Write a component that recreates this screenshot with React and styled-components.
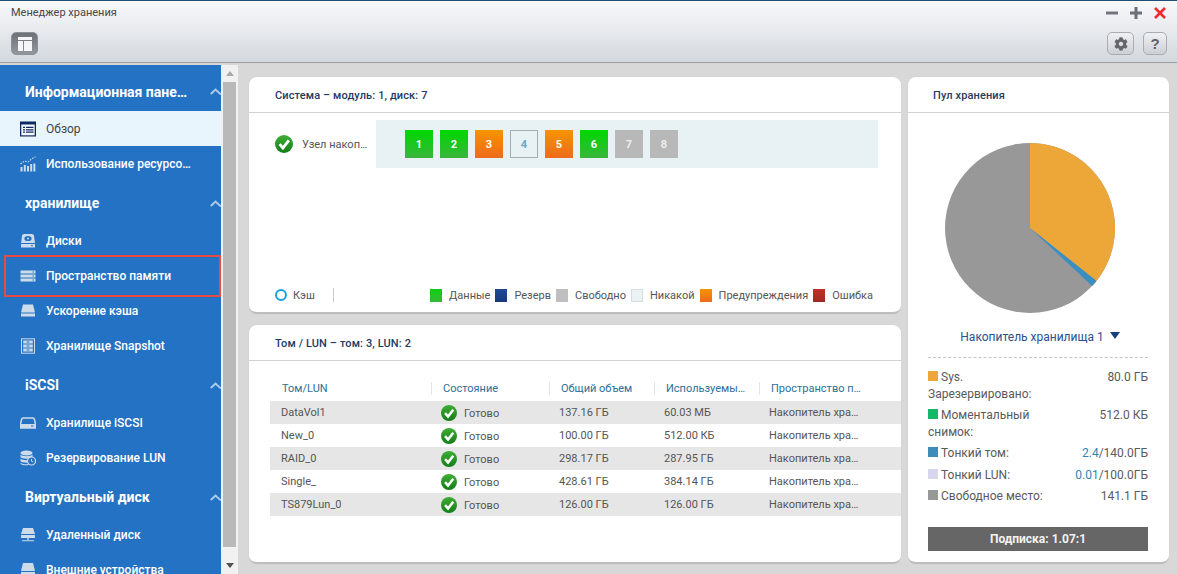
import React from 'react'
import styled, { createGlobalStyle } from 'styled-components'
import { FaCog } from 'react-icons/fa'

const GlobalStyle = createGlobalStyle`
  html, body {
    margin: 0;
    padding: 0;
    height: 100%;
    overflow: hidden;
    font-family: Roboto, "Liberation Sans", sans-serif;
  }
  * { box-sizing: border-box; }
`

const Page = styled.div`
  width: 1177px;
  height: 574px;
  display: flex;
  flex-direction: column;
  overflow: hidden;
  background: #d8d8d8;
`

const TopBar = styled.header`
  height: 63px;
  flex: none;
  display: flex;
  flex-direction: column;
  padding: 0 10px 0 11px;
  border-top: 1px solid #1f4f7a;
  border-bottom: 1px solid #9d9d9d;
  background: linear-gradient(#f7f8fa 0%, #eceef2 35%, #d3d8de 100%);
`

const TitleRow = styled.div`
  height: 23px;
  display: flex;
  align-items: center;
  justify-content: space-between;
`

const WindowTitle = styled.div`
  font-size: 11px;
  color: #474747;
`

const WindowControls = styled.div`
  display: flex;
  gap: 12px;
  margin-right: 1px;
`

const ToolRow = styled.div`
  display: flex;
  align-items: flex-start;
  justify-content: space-between;
  padding-top: 8px;
`

const ToolGroup = styled.div`
  display: flex;
  gap: 9px;
`

const ToolButton = styled.button`
  width: ${p => p.$w || 26}px;
  height: 23px;
  padding: 0;
  display: flex;
  align-items: center;
  justify-content: center;
  border: 1px solid ${p => (p.$dark ? '#8b9096' : '#a9adb2')};
  border-radius: 5px;
  color: #5f6266;
  font: bold 15px "Liberation Sans", sans-serif;
  background: ${p => (p.$dark
    ? 'linear-gradient(#6e7177, #92979e)'
    : 'linear-gradient(#f0f1f3, #ccd0d6)')};
`

const Body = styled.div`
  flex: 1;
  min-height: 0;
  display: flex;
  padding-top: 2px;
`

const Sidebar = styled.nav`
  width: 221px;
  flex: none;
  overflow: hidden;
  background: #2472c3;
  color: #fff;
`

const GroupHeader = styled.div`
  height: ${p => (p.$first ? 46 : 42)}px;
  padding: ${p => (p.$first ? 7 : 2)}px 0 0 25px;
  display: flex;
  align-items: center;
  justify-content: space-between;
  font-size: 14px;
  font-weight: 700;
  white-space: nowrap;
`

const Chevron = styled.svg`
  width: 11px;
  height: 7px;
  margin-right: 0;
  flex: none;
`

const Item = styled.div`
  position: relative;
  height: 35px;
  padding-left: 20px;
  display: flex;
  align-items: center;
  gap: 10px;
  font-size: 12px;
  font-weight: ${p => (p.$active ? 400 : 500)};
  white-space: nowrap;
  color: ${p => (p.$active ? '#444' : '#fff')};
  background: ${p => (p.$active ? '#e8f5fd' : 'transparent')};

  ${p => p.$marked && `
    &::after {
      content: '';
      position: absolute;
      left: 4px;
      right: 0;
      top: -3px;
      bottom: -4px;
      border: 2.5px solid #ea4a40;
    }
  `}
`

const ItemIcon = styled.svg`
  width: 16px;
  height: 16px;
  flex: none;
`

const ScrollTrack = styled.div`
  width: 17px;
  flex: none;
  display: flex;
  flex-direction: column;
  align-items: center;
  background: #f1f1f1;
`

const ScrollArrow = styled.div`
  height: 17px;
  flex: none;
  display: flex;
  align-items: center;
  justify-content: center;
  ${p => !p.$up && 'margin-top: auto;'}

  &::before {
    content: '';
    border-left: 4px solid transparent;
    border-right: 4px solid transparent;
    ${p => (p.$up ? 'border-bottom: 5px solid #a9a9a9;' : 'border-top: 5px solid #505050;')}
  }
`

const ScrollThumb = styled.div`
  width: 13px;
  height: 465px;
  flex: none;
  background: #b9b9b9;
`

const Main = styled.main`
  flex: 1;
  min-width: 0;
  display: grid;
  grid-template-columns: 652px 261px;
  grid-template-rows: 237px 239px;
  gap: 11px 7px;
  padding: 12px 0 0 11px;
`

const Card = styled.section`
  display: flex;
  flex-direction: column;
  min-height: 0;
  background: #fff;
  border-radius: 8px;
  border-bottom: 2px solid #bdbdbd;
  box-shadow: 0 0 1px #c4c4c4;
  ${p => p.$tall && 'grid-row: 1 / span 2; grid-column: 2;'}
`

const CardHeader = styled.div`
  height: 36px;
  flex: none;
  display: flex;
  align-items: center;
  padding: 1px 0 0 ${p => p.$left || 26}px;
  border-bottom: 1px solid #d2d2d2;
  font-size: 11px;
  font-weight: 500;
  letter-spacing: 0.12px;
  color: #1f3a63;
`

const SystemBody = styled.div`
  flex: 1;
  display: flex;
  flex-direction: column;
  justify-content: space-between;
  padding: 7px 23px 9px 26px;
`

const NodeRow = styled.div`
  display: flex;
  align-items: flex-start;
`

const NodeLabel = styled.div`
  width: 101px;
  height: 48px;
  display: flex;
  align-items: center;
  gap: 9px;
  padding-bottom: 0;
  font-size: 11px;
  color: #555;
  white-space: nowrap;
`

const DiskBand = styled.div`
  flex: 1;
  height: 48px;
  display: flex;
  align-items: center;
  gap: 7px;
  padding-left: 29px;
  background: #e8f1f4;
`

const diskFill = {
  ok: 'linear-gradient(#00d800, #38b53c)',
  warn: 'linear-gradient(#f59400, #ee6a1c)',
  empty: '#e8f1f4',
  free: '#b8b8b8',
}

const diskText = { ok: '#fff', warn: '#fff', empty: '#6ba6c9', free: '#eee' }

const Disk = styled.div`
  width: 28px;
  height: 28px;
  display: flex;
  align-items: center;
  justify-content: center;
  font-size: 11px;
  font-weight: 700;
  color: ${p => diskText[p.$state]};
  background: ${p => diskFill[p.$state]};
  border: ${p => (p.$state === 'empty' ? '1px solid #a3adb3' : 'none')};
`

const LegendRow = styled.div`
  height: 16px;
  display: flex;
  align-items: center;
  padding-right: 5px;
  font-size: 11px;
  color: #555;
`

const CacheRing = styled.span`
  width: 12px;
  height: 12px;
  margin-right: 6px;
  border: 2.5px solid #1c9fe0;
  border-radius: 50%;
`

const Divider = styled.span`
  width: 1px;
  height: 14px;
  margin: 0 0 0 18px;
  background: #c9c9c9;
`

const LegendItems = styled.div`
  margin-left: auto;
  display: flex;
  align-items: center;
  gap: 5px;
`

const LegendLabel = styled.span`
  margin-left: 2px;
`

const legendFill = {
  data: 'linear-gradient(#0fd00f, #36b83a)',
  reserve: 'linear-gradient(#1f4a96, #153a7c)',
  free: '#bfbfbf',
  none: '#eaf2f4',
  warn: 'linear-gradient(#f59400, #ee6a1c)',
  error: 'linear-gradient(#c0302a, #a02820)',
}

const LegendSwatch = styled.span`
  width: 12px;
  height: 13px;
  background: ${p => legendFill[p.$kind]};
  ${p => p.$kind === 'none' && 'border: 1px solid #d5dfe2;'}
`

const TableWrap = styled.div`
  padding: 19px 0 0 21px;
`

const columns = '161px 118px 105px 105px 116px'

const HeadRow = styled.div`
  display: grid;
  grid-template-columns: ${columns};
  height: 21px;
  padding-bottom: 4px;
  align-items: center;
  font-size: 11px;
  color: #2d6f96;
`

const HeadCell = styled.div`
  height: 13px;
  line-height: 13px;
  padding-left: ${p => (p.$first ? 12 : 11)}px;
  white-space: nowrap;
  ${p => !p.$first && 'border-left: 1px solid #e4e4e4;'}
`

const DataRow = styled.div`
  display: grid;
  grid-template-columns: ${columns};
  height: 23px;
  align-items: center;
  font-size: 11px;
  color: #555;
  white-space: nowrap;
  background: ${p => (p.$odd ? '#e6e6e6' : '#fff')};
`

const DataCell = styled.div`
  padding-left: ${p => (p.$first ? 11 : 10)}px;
`

const StatusCell = styled.div`
  display: flex;
  align-items: center;
  gap: 7px;
  padding-left: 10px;

  span { padding-top: 2px; }
`

const PoolBody = styled.div`
  flex: 1;
  display: flex;
  flex-direction: column;
  padding: 30px 21px 0 20px;
`

const Pie = styled.svg`
  width: 170px;
  height: 170px;
  margin-left: 17px;
  flex: none;
`

const PoolSelect = styled.div`
  margin-top: 15px;
  height: 17px;
  padding-left: 4px;
  display: flex;
  align-items: center;
  justify-content: center;
  gap: 6px;
  font-size: 12px;
  color: #28508f;

  &::after {
    content: '';
    margin-top: -2px;
    border-left: 5px solid transparent;
    border-right: 5px solid transparent;
    border-top: 7px solid #173f80;
  }
`

const Dashed = styled.div`
  margin: 12px 0 11px;
  border-top: 1px dashed #c6c6c6;
`

const StatRow = styled.div`
  display: flex;
  justify-content: space-between;
  align-items: flex-start;
  margin-bottom: 5px;
  font-size: 12px;
  line-height: 16.5px;
  color: #5a5a5a;
`

const StatName = styled.div`
  width: 125px;
`

const StatSwatch = styled.span`
  display: inline-block;
  width: 10px;
  height: 10px;
  margin-right: 3px;
  background: ${p => p.$color};
`

const Accent = styled.span`
  color: #2d86b5;
`

const RatioBar = styled.div`
  margin-top: 17px;
  height: 24px;
  display: flex;
  align-items: center;
  justify-content: center;
  background: #666;
  color: #f2f2f2;
  font-size: 12px;
  font-weight: 700;
`

const ICON = '#cddbea'

const icons = {
  overview: (
    <>
      <rect x="0" y="0.5" width="16" height="15" fill="#0e2a63" />
      <rect x="1.300" y="3.500" width="13.400" height="10.800" fill="#f4f9fd" />
      <path d="M3 5.800h2v1.200H3zM6 5.800h7.500v1.200H6zM3 8.200h2v1.200H3zM6 8.200h7.500v1.200H6zM3 10.600h2v1.200H3zM6 10.600h7.500v1.200H6z" fill="#0e2a63" />
    </>
  ),
  usage: (
    <>
      <path d="M0.500 11h2v4.500h-2zM3.800 9h2v6.500h-2zM7 10h2v5.500H7zM10.200 8h2v7.500h-2zM13.400 7.500h2v8h-2z" fill={ICON} />
      <path d="M0.500 8 4.500 5 8 6 12 2.500 15.500 1" fill="none" stroke={ICON} strokeWidth="1.100" strokeDasharray="1.600 1.200" />
    </>
  ),
  disk: (
    <>
      <path d="M2 3Q2 1 4 1h8q2 0 2 2l1 7H1z" fill={ICON} />
      <ellipse cx="8" cy="5.500" rx="3.600" ry="2.600" fill="#2472c3" />
      <circle cx="8" cy="5.500" r="1" fill={ICON} />
      <rect x="1" y="11" width="14" height="3.500" fill={ICON} />
      <rect x="11" y="12.200" width="2" height="1" fill="#2472c3" />
    </>
  ),
  space: (
    <>
      <path d="M0.500 2.500h15v3h-15zM0.500 6.500h15v3h-15zM0.500 10.500h15v3h-15z" fill={ICON} />
      <path d="M12.500 3.500h1.500v1h-1.500zM12.500 7.500h1.500v1h-1.500zM12.500 11.500h1.500v1h-1.500z" fill="#2472c3" />
    </>
  ),
  cache: (
    <>
      <path d="M3 1.500h10l2 8H1z" fill={ICON} />
      <rect x="1" y="10.500" width="14" height="3" fill={ICON} />
    </>
  ),
  snapshot: (
    <>
      <rect x="1.500" y="0.800" width="13" height="14.400" fill="none" stroke={ICON} strokeWidth="1" />
      <path d="M3.200 2.500h9.600v3H3.200zM3.200 6.500h9.600v3H3.200zM3.200 10.500h9.600v3H3.200z" fill={ICON} />
      <path d="M6.500 3.600h3v.8h-3zM6.500 7.600h3v.8h-3zM6.500 11.600h3v.8h-3z" fill="#2472c3" />
    </>
  ),
  iscsi: (
    <>
      <path d="M3 3h10q1 0 1.300 1L15.500 9v4h-15V9l1.200-5Q2 3 3 3z" fill="none" stroke={ICON} strokeWidth="1.500" />
      <path d="M1 9h14v4H1z" fill={ICON} />
      <path d="M11 10.500h2.500v1H11z" fill="#2472c3" />
    </>
  ),
  lun: (
    <>
      <ellipse cx="6.500" cy="3" rx="6" ry="2.500" fill={ICON} />
      <path d="M0.500 4.500c1 2.200 11 2.200 12 0v2.500c-1 2.200-11 2.200-12 0zM0.500 8.500c1 2.200 11 2.200 12 0v2.500c-1 2.200-11 2.200-12 0zM0.500 12.500c1 2 8 2.200 8 1v1.500c-3 .8-8 .2-8-1.500z" fill={ICON} />
      <circle cx="11.500" cy="11" r="4" fill="#2472c3" stroke={ICON} strokeWidth="1.200" />
      <path d="M11.500 9v2.200l1.500 .8" fill="none" stroke={ICON} strokeWidth="1" />
    </>
  ),
  remote: (
    <>
      <path d="M3 1h10l2 6H1z" fill={ICON} />
      <rect x="1" y="8" width="14" height="3" fill={ICON} />
      <path d="M7.300 11h1.400v2H7.300zM2 13.200h12v1H2z" fill={ICON} />
    </>
  ),
  external: (
    <>
      <path d="M3 1h10l2 8H1z" fill={ICON} />
      <rect x="1" y="10" width="14" height="4.500" fill={ICON} />
    </>
  ),
}

const CheckIcon = ({ size = 16 }) => (
  <svg width={size} height={size} viewBox="0 0 18 18">
    <defs>
      <linearGradient id="okFill" x1="0" y1="0" x2="0" y2="1">
        <stop offset="0" stopColor="#3fae35" />
        <stop offset="1" stopColor="#137d17" />
      </linearGradient>
    </defs>
    <circle cx="9" cy="9" r="9" fill="url(#okFill)" />
    <path d="M4.600 9.200 7.900 13 13.800 5.400" fill="none" stroke="#fff" strokeWidth="2.800" />
  </svg>
)

const SideChevron = () => (
  <Chevron viewBox="0 0 11 7">
    <path d="M0.800 6 5.500 1.600 11 6.500" fill="none" stroke="#a9cbea" strokeWidth="2" />
  </Chevron>
)

const SideItem = ({ icon, children, ...rest }) => (
  <Item {...rest}>
    <ItemIcon viewBox="0 0 16 16">{icons[icon]}</ItemIcon>
    {children}
  </Item>
)

const disks = ['ok', 'ok', 'warn', 'empty', 'warn', 'ok', 'free', 'free']

const legend = [
  ['data', 'Данные'],
  ['reserve', 'Резерв'],
  ['free', 'Свободно'],
  ['none', 'Никакой'],
  ['warn', 'Предупреждения'],
  ['error', 'Ошибка'],
]

const rows = [
  ['DataVol1', '137.16 ГБ', '60.03 МБ'],
  ['New_0', '100.00 ГБ', '512.00 КБ'],
  ['RAID_0', '298.17 ГБ', '287.95 ГБ'],
  ['Single_', '428.61 ГБ', '384.14 ГБ'],
  ['TS879Lun_0', '126.00 ГБ', '126.00 ГБ'],
]

const heads = ['Том/LUN', 'Состояние', 'Общий объем', 'Используемы…', 'Пространство п…']

// slice of the pie between two angles, measured clockwise from the top
const slice = (from, to) => {
  const pt = a => {
    const r = (a * Math.PI) / 180
    return `${85 + 85 * Math.sin(r)} ${85 - 85 * Math.cos(r)}`
  }
  return `M85 85L${pt(from)}A85 85 0 ${to - from > 180 ? 1 : 0} 1 ${pt(to)}Z`
}

export default function App() {
  return (
    <Page>
      <GlobalStyle />
      <TopBar>
        <TitleRow>
          <WindowTitle>Менеджер хранения</WindowTitle>
          <WindowControls>
            <svg width="12" height="12" viewBox="0 0 12 12"><path d="M0 4.500h12v3H0z" fill="#70757c" /></svg>
            <svg width="12" height="12" viewBox="0 0 12 12"><path d="M0 4.500h12v3H0zM4.500 0h3v12h-3z" fill="#6a6f76" /></svg>
            <svg width="12" height="12" viewBox="0 0 12 12"><path d="M1 1 11 11M11 1 1 11" stroke="#f02a2a" strokeWidth="2.600" /></svg>
          </WindowControls>
        </TitleRow>
        <ToolRow>
          <ToolButton $dark $w={27}>
            <svg width="14" height="14" viewBox="0 0 14 14">
              <path d="M0 0h14v3H0zM0 4h5v10H0zM6 4h8v10H6z" fill="#f4f6f8" />
            </svg>
          </ToolButton>
          <ToolGroup>
            <ToolButton $w={27}><FaCog size={14} color="#63666b" /></ToolButton>
            <ToolButton $w={24}>?</ToolButton>
          </ToolGroup>
        </ToolRow>
      </TopBar>
      <Body>
        <Sidebar>
          <GroupHeader $first>Информационная пане…<SideChevron /></GroupHeader>
          <SideItem icon="overview" $active>Обзор</SideItem>
          <SideItem icon="usage">Использование ресурсо…</SideItem>
          <GroupHeader>хранилище<SideChevron /></GroupHeader>
          <SideItem icon="disk">Диски</SideItem>
          <SideItem icon="space" $marked>Пространство памяти</SideItem>
          <SideItem icon="cache">Ускорение кэша</SideItem>
          <SideItem icon="snapshot">Хранилище Snapshot</SideItem>
          <GroupHeader>iSCSI<SideChevron /></GroupHeader>
          <SideItem icon="iscsi">Хранилище iSCSI</SideItem>
          <SideItem icon="lun">Резервирование LUN</SideItem>
          <GroupHeader>Виртуальный диск<SideChevron /></GroupHeader>
          <SideItem icon="remote">Удаленный диск</SideItem>
          <SideItem icon="external">Внешние устройства</SideItem>
        </Sidebar>
        <ScrollTrack>
          <ScrollArrow $up />
          <ScrollThumb />
          <ScrollArrow />
        </ScrollTrack>
        <Main>
          <Card>
            <CardHeader>Система – модуль: 1, диск: 7</CardHeader>
            <SystemBody>
              <NodeRow>
                <NodeLabel><CheckIcon size={18} />Узел накоп…</NodeLabel>
                <DiskBand>
                  {disks.map((state, i) => (
                    <Disk key={i} $state={state}>{i + 1}</Disk>
                  ))}
                </DiskBand>
              </NodeRow>
              <LegendRow>
                <CacheRing />
                Кэш
                <Divider />
                <LegendItems>
                  {legend.map(([kind, label]) => (
                    <React.Fragment key={kind}>
                      <LegendSwatch $kind={kind} />
                      <LegendLabel>{label}</LegendLabel>
                    </React.Fragment>
                  ))}
                </LegendItems>
              </LegendRow>
            </SystemBody>
          </Card>
          <Card>
            <CardHeader>Том / LUN – том: 3, LUN: 2</CardHeader>
            <TableWrap>
              <HeadRow>
                {heads.map((h, i) => (
                  <HeadCell key={h} $first={i === 0}>{h}</HeadCell>
                ))}
              </HeadRow>
              {rows.map(([name, total, used], i) => (
                <DataRow key={name} $odd={i % 2 === 0}>
                  <DataCell $first>{name}</DataCell>
                  <StatusCell><CheckIcon /><span>Готово</span></StatusCell>
                  <DataCell>{total}</DataCell>
                  <DataCell>{used}</DataCell>
                  <DataCell>Накопитель хра…</DataCell>
                </DataRow>
              ))}
            </TableWrap>
          </Card>
          <Card $tall>
            <CardHeader $left={25}>Пул хранения</CardHeader>
            <PoolBody>
              <Pie viewBox="0 0 170 170">
                <circle cx="85" cy="85" r="85" fill="#989898" />
                <path d={slice(0, 128.5)} fill="#eca738" />
                <path d={slice(128.5, 133)} fill="#3a8fc0" />
              </Pie>
              <PoolSelect>Накопитель хранилища 1</PoolSelect>
              <Dashed />
              <StatRow>
                <StatName><StatSwatch $color="#eca738" />Sys. Зарезервировано:</StatName>
                <div>80.0 ГБ</div>
              </StatRow>
              <StatRow>
                <StatName><StatSwatch $color="#14b866" />Моментальный снимок:</StatName>
                <div>512.0 КБ</div>
              </StatRow>
              <StatRow>
                <StatName><StatSwatch $color="#3f8cb8" />Тонкий том:</StatName>
                <div><Accent>2.4</Accent>/140.0ГБ</div>
              </StatRow>
              <StatRow>
                <StatName><StatSwatch $color="#d6d6ee" />Тонкий LUN:</StatName>
                <div><Accent>0.01</Accent>/100.0ГБ</div>
              </StatRow>
              <StatRow>
                <StatName><StatSwatch $color="#989898" />Свободное место:</StatName>
                <div>141.1 ГБ</div>
              </StatRow>
              <RatioBar>Подписка: 1.07:1</RatioBar>
            </PoolBody>
          </Card>
        </Main>
      </Body>
    </Page>
  )
}
